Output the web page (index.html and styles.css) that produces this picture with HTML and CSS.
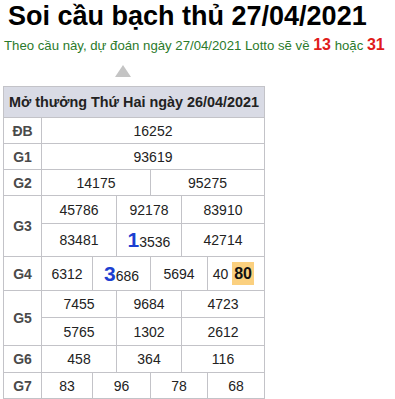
FILE: index.html
```html
<!DOCTYPE html>
<html lang="vi">
<head>
<meta charset="utf-8">
<link rel="stylesheet" href="styles.css">
</head>
<body>
<h1 class="title">Soi cầu bạch thủ 27/04/2021</h1>
<p class="lead">Theo cầu này, dự đoán ngày 27/04/2021 Lotto sẽ về <b class="hot">13</b> hoặc <b class="hot">31</b></p>
<div class="arrow-wrap"><span class="arrow"></span></div>
<table class="kq">
  <colgroup>
    <col class="c0"><col class="c1"><col class="c2"><col class="c3"><col class="c4"><col class="c5"><col class="c6">
  </colgroup>
  <tr class="head"><th colspan="7">Mở thưởng Thứ Hai ngày 26/04/2021</th></tr>
  <tr class="r26"><td class="lbl">ĐB</td><td colspan="6">16252</td></tr>
  <tr class="r26"><td class="lbl">G1</td><td colspan="6">93619</td></tr>
  <tr class="r26"><td class="lbl">G2</td><td colspan="3">14175</td><td colspan="3">95275</td></tr>
  <tr class="r28"><td class="lbl" rowspan="2">G3</td><td colspan="2">45786</td><td colspan="2">92178</td><td colspan="2">83910</td></tr>
  <tr class="r33"><td colspan="2">83481</td><td colspan="2"><span class="big">1</span>3536</td><td colspan="2">42714</td></tr>
  <tr class="r34"><td class="lbl">G4</td><td>6312</td><td colspan="2"><span class="big">3</span>686</td><td colspan="2">5694</td><td class="right">40 <b class="mark">80</b></td></tr>
  <tr class="r27"><td class="lbl" rowspan="2">G5</td><td colspan="2">7455</td><td colspan="2">9684</td><td colspan="2">4723</td></tr>
  <tr class="r28"><td colspan="2">5765</td><td colspan="2">1302</td><td colspan="2">2612</td></tr>
  <tr class="r27"><td class="lbl">G6</td><td colspan="2">458</td><td colspan="2">364</td><td colspan="2">116</td></tr>
  <tr class="r26"><td class="lbl">G7</td><td>83</td><td colspan="2">96</td><td colspan="2">78</td><td>68</td></tr>
</table>
</body>
</html>
```
FILE: styles.css
```css
html, body {
  margin: 0;
  padding: 0;
  background: #fff;
}
body {
  font-family: "Liberation Sans", Arial, sans-serif;
  color: #222;
}
.title {
  margin: 0;
  padding: 0 0 0 8px;
  font-size: 27px;
  line-height: 32px;
  font-weight: bold;
  color: #000;
  white-space: nowrap;
}
.lead {
  margin: 4px 0 0;
  padding-left: 4px;
  height: 20px;
  font-size: 13.2px;
  line-height: 20px;
  color: #2b7a2b;
  white-space: nowrap;
}
.hot {
  color: #e01b1b;
  font-size: 16px;
  line-height: 1;
}
.arrow-wrap {
  height: 21px;
  padding: 9px 0 0 115px;
}
.arrow {
  display: block;
  width: 0;
  height: 0;
  border-left: 8px solid transparent;
  border-right: 8px solid transparent;
  border-bottom: 12px solid #c4c4c4;
}
.kq {
  margin-left: 3px;
  border-collapse: collapse;
  table-layout: fixed;
  width: 262px;
  font-size: 14px;
}
.c0 { width: 38px; }
.c1 { width: 51px; }
.c2 { width: 24px; }
.c3 { width: 34px; }
.c4 { width: 31px; }
.c5 { width: 26px; }
.c6 { width: 57px; }
.kq th, .kq td {
  border: 1px solid #c3c3c8;
  padding: 0;
  text-align: center;
  vertical-align: middle;
  color: #222;
}
.kq .head th {
  background: #d9dbe5;
  height: 30px;
  font-size: 14.4px;
  font-weight: bold;
  color: #222;
  white-space: nowrap;
}
.kq .lbl {
  font-weight: bold;
  color: #4a4a4a;
}
.r26 td { height: 25px; }
.r27 td { height: 26px; }
.r28 td { height: 27px; }
.r33 td { height: 32px; }
.r34 td { height: 33px; }
.kq td.right {
  text-align: right;
  padding-right: 10px;
}
.big {
  color: #1c3fd1;
  font-weight: bold;
  font-size: 21px;
}
.mark {
  display: inline-block;
  background: #fbd07f;
  color: #111;
  font-size: 16px;
  line-height: 23px;
  padding: 0 2px;
}
```
